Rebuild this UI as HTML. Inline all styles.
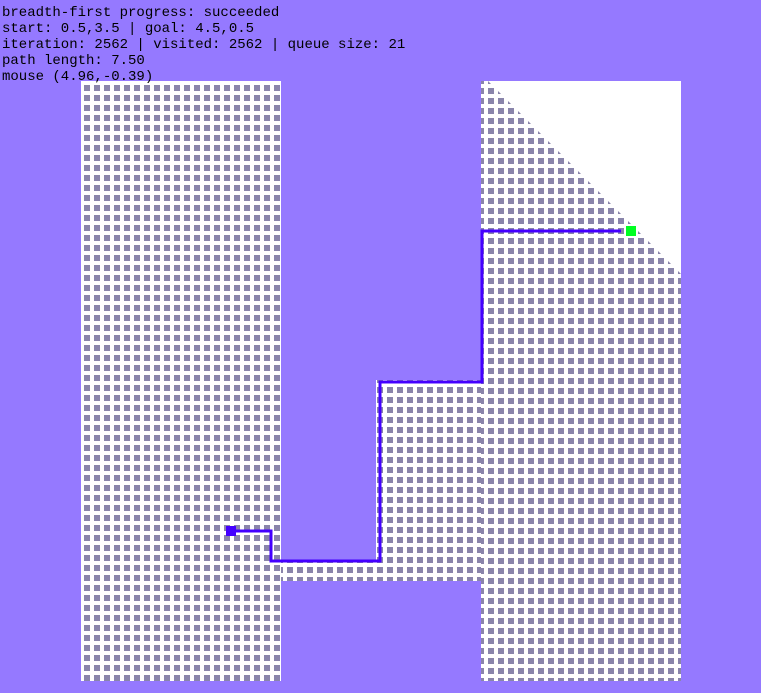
<!DOCTYPE html>
<html><head><style>
html,body{margin:0;padding:0;}
body{width:761px;height:693px;background:#9579ff;position:relative;overflow:hidden;}
svg{position:absolute;left:0;top:0;}
.t{position:absolute;left:2px;top:5px;font-family:"Liberation Mono",monospace;font-size:14px;line-height:16px;color:#000;white-space:pre;}
</style></head><body>
<svg width="761" height="693" viewBox="0 0 761 693" shape-rendering="crispEdges">
<defs>
<pattern id="pl" x="84" y="85" width="10" height="10" patternUnits="userSpaceOnUse"><rect x="0" y="0" width="6" height="6" fill="#8a85ab"/></pattern>
<pattern id="pm" x="387" y="387" width="10" height="10" patternUnits="userSpaceOnUse"><rect x="0" y="0" width="6" height="6" fill="#8a85ab"/></pattern>
<pattern id="pr" x="478" y="78" width="10" height="10" patternUnits="userSpaceOnUse"><rect x="0" y="0" width="6" height="6" fill="#8a85ab"/></pattern>
</defs>
<rect x="0" y="0" width="761" height="693" fill="#9579ff"/>
<rect x="81" y="81" width="200" height="600" fill="#fff"/>
<rect x="281" y="561" width="200" height="20" fill="#fff"/>
<rect x="376" y="380" width="105" height="201" fill="#fff"/>
<rect x="481" y="81" width="200" height="600" fill="#fff"/>
<rect x="81" y="81" width="200" height="600" fill="url(#pl)"/>
<rect x="281" y="561" width="100" height="20" fill="url(#pm)"/>
<rect x="376" y="380" width="105" height="201" fill="url(#pm)"/>
<rect x="481" y="81" width="200" height="600" fill="url(#pr)"/>
<polygon points="488,81 681,81 681,274" fill="#fff" shape-rendering="auto"/>
<polyline points="231,531 271,531 271,561 380,561 380,382 482,382 482,231 621,231" fill="none" stroke="#4400ff" stroke-width="3"/>
<rect x="226" y="526" width="10" height="10" fill="#4400ff"/>
<rect x="626" y="226" width="10" height="10" fill="#00ff22"/>
</svg>
<div class="t">breadth-first progress: succeeded
start: 0.5,3.5 | goal: 4.5,0.5
iteration: 2562 | visited: 2562 | queue size: 21
path length: 7.50
mouse (4.96,-0.39)</div>
</body></html>
